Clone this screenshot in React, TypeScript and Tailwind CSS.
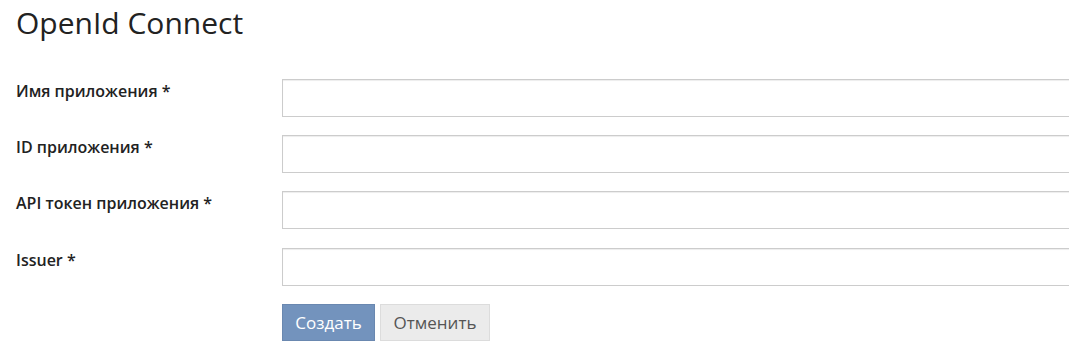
import React from "react";

const labels = ["Имя приложения *", "ID приложения *", "API токен приложения *", "Issuer *"];

export default function App() {
  return (
    <div className="w-[1069px] h-[354px] overflow-hidden bg-white text-[#222]" style={{ fontFamily: "'Open Sans', 'Noto Sans', sans-serif" }}>
      <div className="pl-4 pt-[3px]">
        <h1 className="text-[30px] leading-[40px] font-normal text-[#222]">OpenId Connect</h1>
        <div className="mt-[36px] flex flex-col gap-[18px]">
          {labels.map((l, i) => (
            <div key={i} className={`flex ${i === 3 ? "mt-[1px]" : ""}`}>
              <div className="w-[266px] shrink-0 pt-[1px] text-[16px] leading-[22px] font-semibold text-[#222]">{l}</div>
              <input className="w-[820px] shrink-0 h-[38px] border border-[#ccc] bg-white shadow-[inset_0_1px_1px_rgba(0,0,0,0.075)] outline-none" />
            </div>
          ))}
          <div className="flex pl-[266px] gap-[5px]">
            <button className="h-[37px] w-[93px] bg-[#7393bd] border border-[#6a88b0] text-white text-[17px]">Создать</button>
            <button className="h-[37px] w-[110px] bg-[#ebebeb] border border-[#dcdcdc] text-[#555] text-[17px]">Отменить</button>
          </div>
        </div>
      </div>
    </div>
  );
}
